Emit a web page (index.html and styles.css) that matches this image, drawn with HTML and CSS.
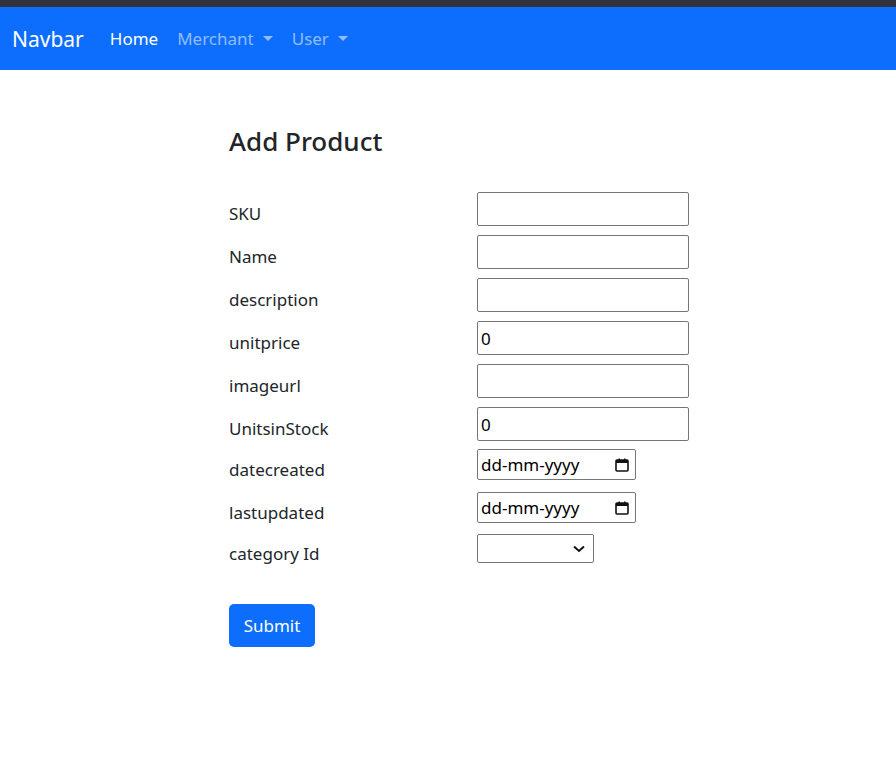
FILE: index.html
```html
<!DOCTYPE html>
<html>
<head>
<meta charset="utf-8">
<link rel="stylesheet" href="styles.css">
</head>
<body>
<div class="topstrip"></div>
<nav class="navbar">
  <span class="brand">Navbar</span>
  <span class="nav-link active">Home</span>
  <span class="nav-link">Merchant<span class="caret"></span></span>
  <span class="nav-link">User<span class="caret"></span></span>
</nav>
<main class="container">
  <h3 class="title">Add Product</h3>
  <form class="form">
    <div class="row"><label class="lbl">SKU</label><input class="field" type="text"></div>
    <div class="row"><label class="lbl">Name</label><input class="field" type="text"></div>
    <div class="row"><label class="lbl">description</label><input class="field" type="text"></div>
    <div class="row"><label class="lbl">unitprice</label><input class="field" type="text" value="0"></div>
    <div class="row"><label class="lbl">imageurl</label><input class="field" type="text"></div>
    <div class="row row-stock"><label class="lbl">UnitsinStock</label><input class="field" type="text" value="0"></div>
    <div class="row row-small"><label class="lbl">datecreated</label>
      <div class="date"><span class="date-text">dd-mm-yyyy</span>
        <svg class="cal" width="16" height="16" viewBox="0 0 16 16"><rect x="2" y="3" width="12" height="11" rx="1" fill="none" stroke="#111" stroke-width="1.6"/><rect x="2" y="3" width="12" height="3" fill="#111"/><rect x="4.5" y="1.5" width="1.5" height="2.5" fill="#111"/><rect x="10" y="1.5" width="1.5" height="2.5" fill="#111"/></svg>
      </div>
    </div>
    <div class="row row-small row-last-date"><label class="lbl">lastupdated</label>
      <div class="date"><span class="date-text">dd-mm-yyyy</span>
        <svg class="cal" width="16" height="16" viewBox="0 0 16 16"><rect x="2" y="3" width="12" height="11" rx="1" fill="none" stroke="#111" stroke-width="1.6"/><rect x="2" y="3" width="12" height="3" fill="#111"/><rect x="4.5" y="1.5" width="1.5" height="2.5" fill="#111"/><rect x="10" y="1.5" width="1.5" height="2.5" fill="#111"/></svg>
      </div>
    </div>
    <div class="row row-select"><label class="lbl">category Id</label>
      <div class="select">
        <svg class="chev" width="14" height="10" viewBox="0 0 14 10"><path d="M2 2.5 L7 7 L12 2.5" fill="none" stroke="#111" stroke-width="2"/></svg>
      </div>
    </div>
    <button class="btn" type="button">Submit</button>
  </form>
</main>
</body>
</html>
```
FILE: styles.css
```css
html, body {
  margin: 0;
  padding: 0;
  background: #fff;
  font-family: "Noto Sans", "Open Sans", sans-serif;
  color: #212529;
}
.topstrip {
  height: 7px;
  background: #31323e;
}
.navbar {
  height: 63px;
  background: #0d6efd;
  display: flex;
  align-items: center;
  padding-left: 12px;
  box-sizing: border-box;
}
.brand {
  color: #fff;
  font-size: 21px;
  margin-right: 26px;
}
.nav-link {
  color: rgba(255,255,255,0.55);
  font-size: 17px;
  margin-right: 19px;
  display: inline-flex;
  align-items: center;
}
.nav-link.active {
  color: #fff;
}
.caret {
  display: inline-block;
  width: 0;
  height: 0;
  margin-left: 9px;
  border-left: 5px solid transparent;
  border-right: 5px solid transparent;
  border-top: 5px solid rgba(255,255,255,0.55);
}
.container {
  padding-left: 228px;
  padding-top: 56px;
}
.title {
  margin: 0 0 35px 1px;
  font-size: 26px;
  font-weight: 500;
  line-height: 1.2;
}
.form {
  display: flex;
  flex-direction: column;
}
.row {
  display: flex;
  align-items: center;
  height: 34px;
  margin-bottom: 9px;
}
.row-stock {
  margin-bottom: 8px;
}
.row-small {
  height: 31px;
  margin-bottom: 12px;
}
.row-last-date {
  margin-bottom: 11px;
}
.row-select {
  height: 29px;
  margin-bottom: 12px;
}
.lbl {
  width: 248px;
  font-size: 17px;
  padding-top: 9px;
  padding-left: 1px;
}
.field {
  width: 212px;
  height: 34px;
  box-sizing: border-box;
  border: 1px solid #767676;
  border-radius: 2px;
  padding: 0 3px;
  font-family: "Noto Sans", sans-serif;
  font-size: 17px;
  color: #000;
  margin: 0;
  outline: none;
}
.date {
  width: 159px;
  height: 31px;
  box-sizing: border-box;
  border: 1px solid #767676;
  border-radius: 2px;
  display: flex;
  align-items: center;
  justify-content: space-between;
  padding: 0 5px 0 3px;
  font-size: 17px;
  color: #000;
}
.cal {
  display: block;
}
.select {
  width: 117px;
  height: 29px;
  box-sizing: border-box;
  border: 1px solid #767676;
  border-radius: 2px;
  display: flex;
  align-items: center;
  justify-content: flex-end;
  padding-right: 7px;
}
.chev { display: block; }
.btn {
  align-self: flex-start;
  margin-top: 29px;
  margin-left: 1px;
  width: 86px;
  height: 43px;
  background: #0d6efd;
  color: #fff;
  border: none;
  border-radius: 5px;
  font-family: "Noto Sans", sans-serif;
  font-size: 17px;
  padding: 0;
}
```
